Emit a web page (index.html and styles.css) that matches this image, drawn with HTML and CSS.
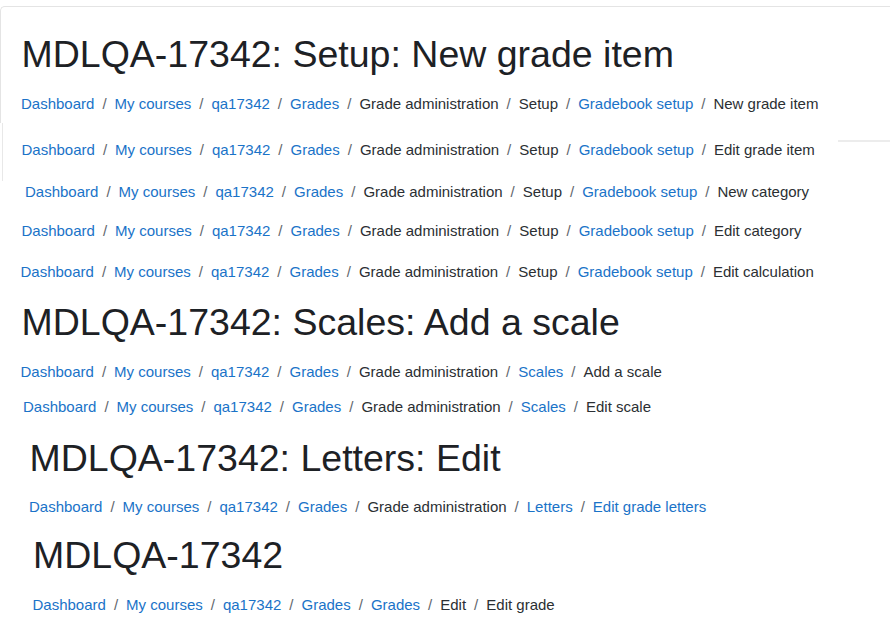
FILE: index.html
```html
<!DOCTYPE html>
<html lang="en">
<head>
  <meta charset="UTF-8">
  <meta name="viewport" content="width=device-width, initial-scale=1.0">
  <title>MDLQA-17342 gradebook breadcrumbs</title>
  <link rel="stylesheet" href="styles.css">
</head>
<body>

  <!-- Setup: new grade item (page header card) -->
  <div class="shot shot-card">
    <h1>MDLQA-17342: Setup: New grade item</h1>
    <nav>
      <ol class="breadcrumb">
        <li class="breadcrumb-item"><a href="#">Dashboard</a></li>
        <li class="breadcrumb-item"><a href="#">My courses</a></li>
        <li class="breadcrumb-item"><a href="#">qa17342</a></li>
        <li class="breadcrumb-item"><a href="#">Grades</a></li>
        <li class="breadcrumb-item">Grade administration</li>
        <li class="breadcrumb-item">Setup</li>
        <li class="breadcrumb-item"><a href="#">Gradebook setup</a></li>
        <li class="breadcrumb-item">New grade item</li>
      </ol>
    </nav>
  </div>

  <!-- Edit grade item -->
  <div class="shot shot-edge">
    <nav>
      <ol class="breadcrumb">
        <li class="breadcrumb-item"><a href="#">Dashboard</a></li>
        <li class="breadcrumb-item"><a href="#">My courses</a></li>
        <li class="breadcrumb-item"><a href="#">qa17342</a></li>
        <li class="breadcrumb-item"><a href="#">Grades</a></li>
        <li class="breadcrumb-item">Grade administration</li>
        <li class="breadcrumb-item">Setup</li>
        <li class="breadcrumb-item"><a href="#">Gradebook setup</a></li>
        <li class="breadcrumb-item">Edit grade item</li>
      </ol>
    </nav>
    <div class="shot-rule"></div>
  </div>

  <!-- New category -->
  <div class="shot shot-new-category">
    <nav>
      <ol class="breadcrumb">
        <li class="breadcrumb-item"><a href="#">Dashboard</a></li>
        <li class="breadcrumb-item"><a href="#">My courses</a></li>
        <li class="breadcrumb-item"><a href="#">qa17342</a></li>
        <li class="breadcrumb-item"><a href="#">Grades</a></li>
        <li class="breadcrumb-item">Grade administration</li>
        <li class="breadcrumb-item">Setup</li>
        <li class="breadcrumb-item"><a href="#">Gradebook setup</a></li>
        <li class="breadcrumb-item">New category</li>
      </ol>
    </nav>
  </div>

  <!-- Edit category -->
  <div class="shot shot-edit-category">
    <nav>
      <ol class="breadcrumb">
        <li class="breadcrumb-item"><a href="#">Dashboard</a></li>
        <li class="breadcrumb-item"><a href="#">My courses</a></li>
        <li class="breadcrumb-item"><a href="#">qa17342</a></li>
        <li class="breadcrumb-item"><a href="#">Grades</a></li>
        <li class="breadcrumb-item">Grade administration</li>
        <li class="breadcrumb-item">Setup</li>
        <li class="breadcrumb-item"><a href="#">Gradebook setup</a></li>
        <li class="breadcrumb-item">Edit category</li>
      </ol>
    </nav>
  </div>

  <!-- Edit calculation -->
  <div class="shot shot-edit-calc">
    <nav>
      <ol class="breadcrumb">
        <li class="breadcrumb-item"><a href="#">Dashboard</a></li>
        <li class="breadcrumb-item"><a href="#">My courses</a></li>
        <li class="breadcrumb-item"><a href="#">qa17342</a></li>
        <li class="breadcrumb-item"><a href="#">Grades</a></li>
        <li class="breadcrumb-item">Grade administration</li>
        <li class="breadcrumb-item">Setup</li>
        <li class="breadcrumb-item"><a href="#">Gradebook setup</a></li>
        <li class="breadcrumb-item">Edit calculation</li>
      </ol>
    </nav>
  </div>

  <!-- Scales -->
  <div class="shot shot-scales">
    <h1>MDLQA-17342: Scales: Add a scale</h1>
    <nav>
      <ol class="breadcrumb">
        <li class="breadcrumb-item"><a href="#">Dashboard</a></li>
        <li class="breadcrumb-item"><a href="#">My courses</a></li>
        <li class="breadcrumb-item"><a href="#">qa17342</a></li>
        <li class="breadcrumb-item"><a href="#">Grades</a></li>
        <li class="breadcrumb-item">Grade administration</li>
        <li class="breadcrumb-item"><a href="#">Scales</a></li>
        <li class="breadcrumb-item">Add a scale</li>
      </ol>
    </nav>
  </div>

  <div class="shot shot-edit-scale">
    <nav>
      <ol class="breadcrumb">
        <li class="breadcrumb-item"><a href="#">Dashboard</a></li>
        <li class="breadcrumb-item"><a href="#">My courses</a></li>
        <li class="breadcrumb-item"><a href="#">qa17342</a></li>
        <li class="breadcrumb-item"><a href="#">Grades</a></li>
        <li class="breadcrumb-item">Grade administration</li>
        <li class="breadcrumb-item"><a href="#">Scales</a></li>
        <li class="breadcrumb-item">Edit scale</li>
      </ol>
    </nav>
  </div>

  <!-- Letters -->
  <div class="shot shot-letters">
    <h1>MDLQA-17342: Letters: Edit</h1>
    <nav>
      <ol class="breadcrumb">
        <li class="breadcrumb-item"><a href="#">Dashboard</a></li>
        <li class="breadcrumb-item"><a href="#">My courses</a></li>
        <li class="breadcrumb-item"><a href="#">qa17342</a></li>
        <li class="breadcrumb-item"><a href="#">Grades</a></li>
        <li class="breadcrumb-item">Grade administration</li>
        <li class="breadcrumb-item"><a href="#">Letters</a></li>
        <li class="breadcrumb-item"><a href="#">Edit grade letters</a></li>
      </ol>
    </nav>
  </div>

  <!-- Edit grade -->
  <div class="shot shot-edit-grade">
    <h1>MDLQA-17342</h1>
    <nav>
      <ol class="breadcrumb">
        <li class="breadcrumb-item"><a href="#">Dashboard</a></li>
        <li class="breadcrumb-item"><a href="#">My courses</a></li>
        <li class="breadcrumb-item"><a href="#">qa17342</a></li>
        <li class="breadcrumb-item"><a href="#">Grades</a></li>
        <li class="breadcrumb-item"><a href="#">Grades</a></li>
        <li class="breadcrumb-item">Edit</li>
        <li class="breadcrumb-item">Edit grade</li>
      </ol>
    </nav>
  </div>

</body>
</html>
```

FILE: styles.css
```css
/* General Styles */
body {
  font-family: 'Liberation Sans', Arial, sans-serif;
  margin: 0;
  padding: 0;
  background: #fff;
  color: #1d2125;
  overflow: hidden;
}

h1 {
  font-size: 37.5px;
  font-weight: 400;
  line-height: 1.2;
  margin: 0 0 0 1.5px;
  color: #1d2125;
  white-space: nowrap;
}

/* Breadcrumb */
.breadcrumb {
  display: flex;
  list-style: none;
  margin: 0;
  padding: 0;
  font-size: 15px;
  line-height: 22.5px;
  color: #2b2f33;
  white-space: nowrap;
}

.breadcrumb-item + .breadcrumb-item {
  padding-left: 8px;
}

.breadcrumb-item + .breadcrumb-item::before {
  content: "/";
  padding-right: 8px;
  color: #5f666d;
}

.breadcrumb a {
  color: #1a73c8;
  text-decoration: none;
}

/* Each cropped screenshot */
.shot h1 + nav {
  margin-top: 16px;
}

.shot-card {
  margin-top: 6px;
  padding: 24.5px 0 8px 19px;
  border-top: 1px solid #e4e4e4;
  border-left: 1px solid #e4e4e4;
  border-top-left-radius: 5px;
}

.shot-card .breadcrumb {
  margin-left: 1px;
}

.shot-edge {
  display: flex;
  margin-left: 2px;
  padding: 16px 0 19.5px 18.5px;
  border-left: 1px solid #e8e8e8;
}

.shot-rule {
  margin-left: auto;
  margin-top: 1px;
  width: 52px;
  align-self: flex-start;
  border-top: 2px solid #ececec;
}

.shot-new-category {
  padding-left: 25px;
}

.shot-edit-category {
  margin-top: 16.5px;
  padding-left: 21.5px;
}

.shot-edit-calc {
  margin-top: 18.5px;
  padding-left: 20.5px;
}

.shot-scales {
  margin-top: 16px;
  padding-left: 20px;
}

.shot-scales nav {
  margin-left: 0.5px;
}

.shot-scales h1 + nav {
  margin-top: 16.5px;
}

.shot-edit-scale {
  margin-top: 12.5px;
  padding-left: 23px;
}

.shot-letters {
  margin-top: 17.5px;
  padding-left: 28px;
}

.shot-letters h1 + nav {
  margin-top: 15px;
  margin-left: 1px;
}

.shot-edit-grade {
  margin-top: 14px;
  padding-left: 31.5px;
}

.shot-edit-grade nav {
  margin-left: 1px;
}
```
